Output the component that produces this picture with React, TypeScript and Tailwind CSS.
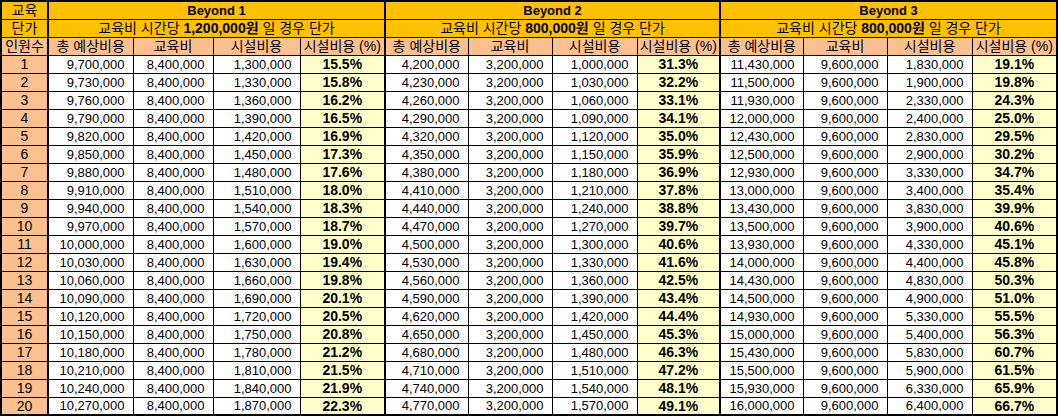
import React from 'react'

type Row = { total: number; edu: number; fac: number; pct: string }

const fmt = (n: number) => n.toLocaleString('en-US')

const pctOf = (fac: number, edu: number) => (Math.round((fac / edu) * 1000) / 10).toFixed(1) + '%'

// Beyond 1 / 2 follow a fixed step of 30,000 per person
const beyond1: Row[] = Array.from({ length: 20 }, (_, i) => {
  const edu = 8400000
  const fac = 1300000 + 30000 * i
  return { total: edu + fac, edu, fac, pct: pctOf(fac, edu) }
})

const beyond2: Row[] = Array.from({ length: 20 }, (_, i) => {
  const edu = 3200000
  const fac = 1000000 + 30000 * i
  return { total: edu + fac, edu, fac, pct: pctOf(fac, edu) }
})

const b3Fac = [
  1830000, 1900000, 2330000, 2400000, 2830000, 2900000, 3330000, 3400000, 3830000, 3900000,
  4330000, 4400000, 4830000, 4900000, 5330000, 5400000, 5830000, 5900000, 6330000, 6400000,
]
const b3Pct = [
  '19.1%', '19.8%', '24.3%', '25.0%', '29.5%', '30.2%', '34.7%', '35.4%', '39.9%', '40.6%',
  '45.1%', '45.8%', '50.3%', '51.0%', '55.5%', '56.3%', '60.7%', '61.5%', '65.9%', '66.7%',
]
const beyond3: Row[] = b3Fac.map((fac, i) => ({ total: 9600000 + fac, edu: 9600000, fac, pct: b3Pct[i] }))

const groups = [
  { name: 'Beyond 1', price: '1,200,000원', rows: beyond1 },
  { name: 'Beyond 2', price: '800,000원', rows: beyond2 },
  { name: 'Beyond 3', price: '800,000원', rows: beyond3 },
]

const colWidths = [47, 85, 80, 87, 85, 83, 84, 85, 83, 83, 84, 85, 85]

const yellow = 'bg-[#ffc000]'
const peach = 'bg-[#fac090]'
const cell = 'border border-black p-0 leading-none'

export default function App() {
  return (
    <div className="bg-white w-[1058px] h-[417px] overflow-hidden text-black" style={{ fontFamily: '"Liberation Sans", "Noto Sans CJK KR", sans-serif' }}>
      <table className="table-fixed border-collapse w-[1057px] text-[13px] border-2 border-black">
        <colgroup>
          {colWidths.map((w, i) => (
            <col key={i} style={{ width: w }} />
          ))}
        </colgroup>
        <tbody>
          {/* group titles */}
          <tr>
            <td className={`${cell} ${yellow} h-[18px] text-center text-[14px] border-r-2`}>교육</td>
            {groups.map((g) => (
              <td key={g.name} colSpan={4} className={`${cell} ${yellow} text-center font-bold border-r-2`}>
                {g.name}
              </td>
            ))}
          </tr>
          {/* unit price */}
          <tr>
            <td className={`${cell} ${yellow} h-[18px] text-center text-[14px] border-r-2`}>단가</td>
            {groups.map((g) => (
              <td key={g.name} colSpan={4} className={`${cell} ${yellow} text-center text-[14px] border-r-2`}>
                교육비 시간당 <span className="font-bold">{g.price}</span> 일 경우 단가
              </td>
            ))}
          </tr>
          {/* column headers */}
          <tr>
            <td className={`${cell} ${peach} h-[18px] text-center text-[14px] border-r-2`}>인원수</td>
            {groups.map((g) => (
              <React.Fragment key={g.name}>
                <td className={`${cell} ${peach} text-center text-[14px]`}>총 예상비용</td>
                <td className={`${cell} ${peach} text-center text-[14px]`}>교육비</td>
                <td className={`${cell} ${peach} text-center text-[14px]`}>시설비용</td>
                <td className={`${cell} ${peach} text-center text-[14px] border-r-2`}>시설비용 (%)</td>
              </React.Fragment>
            ))}
          </tr>
          {Array.from({ length: 20 }, (_, i) => (
            <tr key={i}>
              <td className={`${cell} ${peach} h-[18px] text-center text-[14px] border-r-2`}>{i + 1}</td>
              {groups.map((g) => {
                const r = g.rows[i]
                return (
                  <React.Fragment key={g.name}>
                    <td className={`${cell} text-right pr-[8px]`}>{fmt(r.total)}</td>
                    <td className={`${cell} text-right pr-[8px]`}>{fmt(r.edu)}</td>
                    <td className={`${cell} text-right pr-[8px]`}>{fmt(r.fac)}</td>
                    <td className={`${cell} bg-[#ffffcc] text-center font-bold text-[14px] border-r-2`}>{r.pct}</td>
                  </React.Fragment>
                )
              })}
            </tr>
          ))}
        </tbody>
      </table>
    </div>
  )
}
